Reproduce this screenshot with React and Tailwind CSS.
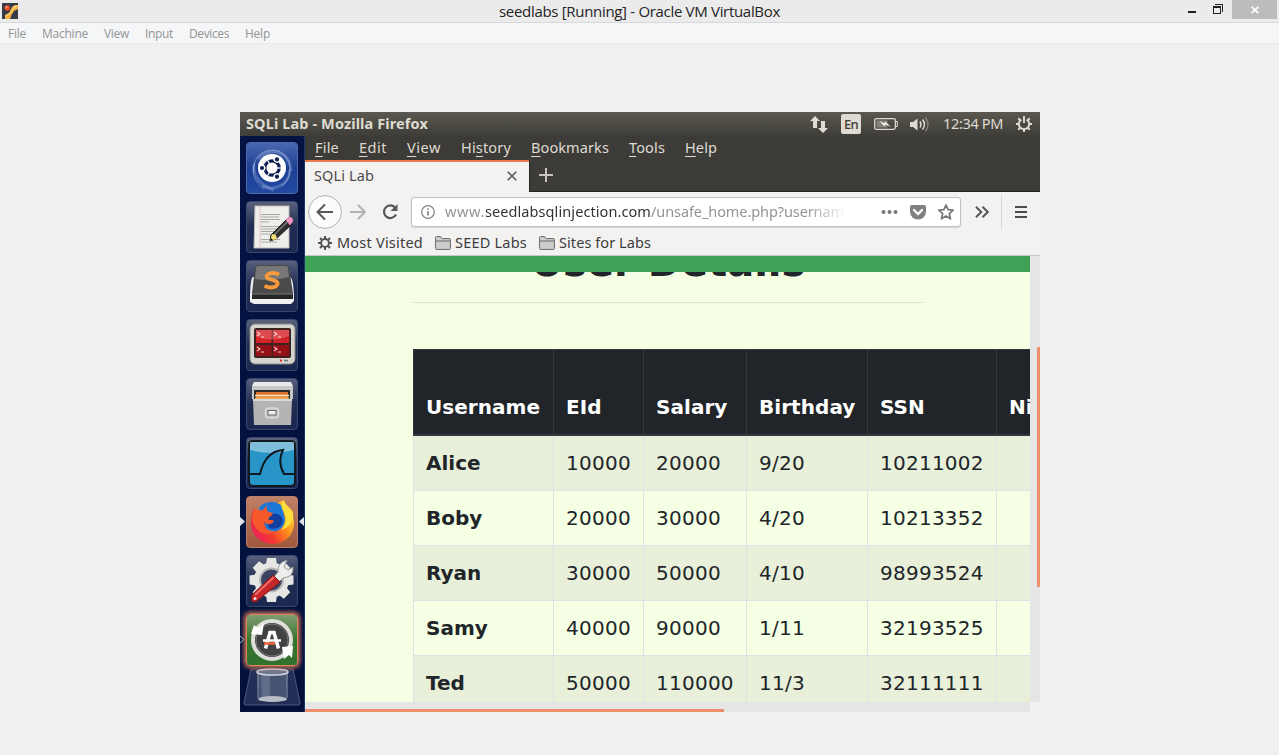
import { useLayoutEffect, useRef } from "react";

/* Text run that is tracked so that it fills exactly `w` pixels. */
function Fit({ w, className = "", children }) {
  const ref = useRef(null);
  useLayoutEffect(() => {
    const el = ref.current;
    el.style.letterSpacing = "0px";
    const natural = el.getBoundingClientRect().width;
    el.style.letterSpacing = (w - natural) / el.textContent.length + "px";
  }, [w]);
  return (
    <span className="block shrink-0" style={{ width: w }}>
      <span ref={ref} className={"inline-block whitespace-nowrap " + className}>{children}</span>
    </span>
  );
}

function TitleBar() {
  return (
    <div className="flex h-[23px] shrink-0 border-b border-[#d6d9dc] bg-[#ebebeb]">
      <svg className="mt-[3px] ml-[2px] size-4 shrink-0" viewBox="0 0 16 16">
        <rect width="16" height="16" fill="#373a48" />
        <path d="M10 4l3-2h3v4l-4 2-2 3-2 5H3v-4l4-2z" fill="#f6b041" />
        <path d="M11 4l4-1-4 3-3 4-4 3" stroke="#ffe08a" fill="none" />
        <circle cx="5.3" cy="5" r="2.8" fill="#f04b23" />
        <circle cx="4.6" cy="4.2" r="1.1" fill="#ff9d77" />
      </svg>
      <div className="flex h-[22px] flex-1 items-center pl-[481px] font-['Open_Sans'] text-[15px] leading-none text-[#242424]">
        <Fit w={281}>seedlabs [Running] - Oracle VM VirtualBox</Fit>
      </div>
      <svg className="h-[19px] w-[44px] shrink-0" viewBox="0 0 44 19" shapeRendering="crispEdges">
        <rect x="0" y="11" width="8" height="2" fill="#222" />
        <path d="M27 4h8v8h-1V5h-7z" fill="#222" />
        <path d="M25 6h8v8h-8z M26 8h6v5h-6z" fill="#222" fillRule="evenodd" />
      </svg>
      <div className="mr-[2px] flex h-[19px] w-[45px] items-center justify-center bg-[#bcbcbc]">
        <svg className="size-[8px]" viewBox="0 0 8 8">
          <path d="M.6.900l6.800 6.200M7.400.900L.6 7.100" stroke="#fff" strokeWidth="1.700" />
        </svg>
      </div>
    </div>
  );
}

const hostMenu = [["File", 18], ["Machine", 46], ["View", 25], ["Input", 28], ["Devices", 40], ["Help", 25]];

function HostMenu() {
  return (
    <div className="flex h-[21px] shrink-0 items-center gap-4 border-b border-[#e9ebec] bg-[#f5f6f8] pt-[2px] pl-2 font-['Open_Sans'] text-[12px] leading-none text-[#949494]">
      {hostMenu.map(([t, w]) => <Fit key={t} w={w}>{t}</Fit>)}
    </div>
  );
}

function TopPanel() {
  return (
    <div className="flex h-6 shrink-0 items-center bg-linear-to-b from-[#5a5850] to-[#3e3d38] pl-[6px] leading-none text-[#dfdbd2]">
      <Fit w={182} className="pb-[2px] text-[14.5px] font-bold">SQLi Lab - Mozilla Firefox</Fit>
      <svg className="mt-[1px] ml-[382px] h-[17px] w-[18px] shrink-0" viewBox="0 0 18 17">
        <path d="M5 0l5 5H7v7H3V5H0z M13 17l-5-5h3V5h4v7h3z" fill="#dfdbd2" />
      </svg>
      <div className="ml-[13px] flex h-5 w-5 items-center justify-center rounded-[2px] bg-[#dfdbd2] text-[13px] font-medium text-[#3c3b37]">
        <Fit w={14}>En</Fit>
      </div>
      <svg className="ml-[13px] h-3 w-6 shrink-0" viewBox="0 0 24 12">
        <rect x=".7" y=".7" width="20.600" height="10.600" rx="1.500" fill="none" stroke="#dfdbd2" strokeWidth="1.300" />
        <path d="M22 3.500h1.300v5H22" stroke="#dfdbd2" fill="none" />
        <rect x="2.500" y="2.500" width="11" height="7" fill="#85827a" />
        <path d="M5.500 3l5 2.200.8-1.700 5.700 5.500-5.500-2.500-1 2z" fill="#f2eee6" />
      </svg>
      <svg className="ml-3 h-[17px] w-[20px] shrink-0" viewBox="0 0 20 17" fill="none">
        <path d="M0 6h3l4.500-3.500v12L3 11H0z" fill="#dfdbd2" />
        <path d="M10 5.500q2 3 0 6M12.500 3.500q4 5 0 10" stroke="#dfdbd2" strokeWidth="1.500" />
        <path d="M15.500 1.500q5 7 0 14" stroke="#85827a" strokeWidth="1.400" />
      </svg>
      <div className="ml-[13px] text-[14.5px]"><Fit w={60} className="pb-[2px]">12:34 PM</Fit></div>
      <svg className="ml-[13px] size-4 shrink-0" viewBox="0 0 16 16" fill="none" stroke="#dfdbd2">
        <path d="M5.300 3.600A5.200 5.200 0 1 0 10.700 3.600M8 0v7" strokeWidth="1.900" />
        <path d="M0 8h3M13 8h3M8 13v3M2.300 2.300l2 2M13.700 2.300l-2 2M2.300 13.700l2-2M13.700 13.700l-2-2" strokeWidth="2" />
      </svg>
    </div>
  );
}

const tileBase = "flex size-[52px] shrink-0 items-center justify-center rounded-[4px] border ";
const glass = "border-[#3a476c] bg-linear-to-b from-[#59617c] via-[#202b51] to-[#1b2850]";

function Tile({ tone = glass, children }) {
  return (
    <div className={tileBase + tone}>
      <svg viewBox="0 0 52 52" className="size-[52px] shrink-0">{children}</svg>
    </div>
  );
}

const teeth = [0, 45, 90, 135, 180, 225, 270, 315];

function Launcher() {
  return (
    <div className="flex w-[65px] shrink-0 flex-col items-center gap-[7px] border-r border-[#1d3768] bg-linear-to-b from-[#041344] to-[#02103a] pt-[6px]">
      <Tile tone="border-[#4c68ab] bg-linear-to-b from-[#4968ae] via-[#1c3f93] to-[#2349a1]">
        <g fill="none" stroke="#a9c0ea">
          <path d="M8 31C5 14 20 5 33 9" strokeWidth="1" opacity=".6" />
          <path d="M12 17C24 3 45 10 45 29" strokeWidth="3" opacity=".3" />
          <path d="M32 9C46 14 48 34 36 44" strokeWidth="1" opacity=".6" />
          <path d="M44 28C43 44 28 49 16 44" strokeWidth="3" opacity=".3" />
          <path d="M8 22C6 36 18 45 28 48" strokeWidth="3" opacity=".3" />
          <path d="M18 47C8 40 5 30 9 20" strokeWidth="1" opacity=".45" />
        </g>
        <circle cx="26" cy="26" r="14" fill="#fff" />
        <circle cx="26" cy="26" r="7.200" fill="none" stroke="#101f52" strokeWidth="3.200" />
        {[60, 180, 300].map((a) => (
          <g key={a} transform={"rotate(" + a + " 26 26)"}>
            <circle cx="35.700" cy="26" r="3.200" fill="#fff" />
            <circle cx="36" cy="26" r="2.100" fill="#101f52" />
            <path d="M17 26h4" stroke="#fff" strokeWidth="1.200" />
          </g>
        ))}
      </Tile>
      <Tile>
        <path d="M9 5h34v42H8z" fill="#eeeeea" stroke="#bdbdb9" />
        <path d="M14 5v41" stroke="#e8aaa6" strokeWidth=".6" />
        <path d="M15 13.500h19M15 16h18M15 18.500h19M15 21h8M15 25.500h18M15 28h19M15 30.500h15M15 33h17M15 38.500h19M15 41h16" stroke="#a8a8a5" />
        <path d="M24 40l1-6L41 18l5 5-16 15z" fill="#30302f" stroke="#161616" />
        <path d="M27 35L42 20" stroke="#777" strokeWidth="1.600" />
        <path d="M24 40l2-7 4 1 1 4z" fill="#f5df74" />
        <path d="M24 40l1-3 2 2z" fill="#111" />
        <path d="M40 19l3-3q4 0 4 4l-3 4z" fill="#f29cc4" stroke="#d67aa7" />
      </Tile>
      <Tile>
        <path d="M7 17q-3 1-3 25l4 2h37l3-3q0-22-4-24" fill="#f0f0f0" />
        <path d="M9 8q0-3 3-3h28q3 0 3 3l4 25v6H6v-6z" fill="#4a4a4a" />
        <path d="M10 8q0-2 2-2h28q2 0 2 2l1 9q-18 5-34 2z" fill="#777" />
        <path d="M6 34h41v5H6z" fill="#272727" />
        <path d="M6 34h41" stroke="#767676" />
        <path d="M33 14.500q-5-2.500-10-.8-4.500 2.300-1 4.800l7 2.300q5 2.500 1 5.500-5 2.500-11.500-.3" fill="none" stroke="#f79b3c" strokeWidth="3.800" />
      </Tile>
      <Tile>
        <rect x="4" y="5" width="45" height="40" rx="5" fill="#d5d5cf" stroke="#8d8d87" />
        <rect x="8" y="9" width="37" height="30" rx="2" fill="#3e2222" />
        <path d="M10 11h15.500v13H10z M27 11h16v13H27z" fill="#d32329" />
        <path d="M10 26h15.500v11H10z M27 26h16v11H27z" fill="#951118" />
        <path d="M10 11h33v6q-18 7-33 0z" fill="#f28489" opacity=".4" />
        <g fill="none" stroke="#f6cfcf" strokeWidth="1.100">
          <path d="M11 13l3 2-3 2M15 18h3M28 13l3 2-3 2M32 18h3M11 28l3 2-3 2M15 33h3M28 28l3 2-3 2M32 33h3" />
        </g>
        <path d="M34 41.500h2" stroke="#f02020" strokeWidth="2" />
        <path d="M38 41.500h4" stroke="#777" strokeWidth="1.500" />
      </Tile>
      <Tile>
        <path d="M6 8l2-4h37l2 4v13H6z" fill="#eaeaea" />
        <path d="M6 8h41v13H6z" fill="#c8c8c8" />
        <path d="M8 12h36v10H8z" fill="#2d2b2a" />
        <path d="M10 14h32v10H10z" fill="#d87532" />
        <path d="M9 17.500h34" stroke="#ffe3ad" strokeWidth="1.500" />
        <path d="M9 20h34" stroke="#efb062" strokeWidth="1.500" />
        <path d="M7 21h39l-1 26H8z" fill="#b4b4b2" />
        <path d="M7 22h39" stroke="#dadada" strokeWidth="2" />
        <rect x="19.500" y="30" width="13" height="10" rx="2" fill="#c8c8c8" stroke="#e4e4e4" />
        <rect x="22" y="32.500" width="8" height="4.500" fill="#eee" stroke="#666" />
      </Tile>
      <Tile>
        <rect x="3" y="4" width="46" height="45" rx="4" fill="#2795c8" stroke="#101820" strokeWidth="2" />
        <path d="M4 5h44v8q-22 6-44 0z" fill="#c7e2ed" opacity=".55" />
        <path d="M4 37h10C17 24 24 14 37 13c-4 8-3 17 1 24h10" fill="none" stroke="#101820" strokeWidth="2" />
      </Tile>
      <div className="relative">
        <Tile tone="border-[#b98069] bg-linear-to-b from-[#be8066] to-[#a1583d]">
          <defs>
            <linearGradient id="fox" x1="0" y1=".8" x2="1" y2=".2">
              <stop offset="0" stopColor="#e81e63" />
              <stop offset=".35" stopColor="#f53a2e" />
              <stop offset=".65" stopColor="#ff8e1f" />
              <stop offset="1" stopColor="#ffe03c" />
            </linearGradient>
          </defs>
          <path d="M8 12c1 2 3 3 5 3L38 4c0 5 10 11 10 23a21.500 20.500 0 0 1-43 1C5 21 6 16 8 12z" fill="url(#fox)" />
          <path d="M13 12C18 5 30 4 36 10l3 13c0 10-10 15-18 12z" fill="#1d77d6" />
          <path d="M23 18c8-2 14 1 14 8-2 6-10 9-15 5z" fill="#153f9e" />
          <path d="M8 13c3 1 6 2 9 1 1-2 2-3 4-4-1 3 0 5 2 6l4 1c-1 3-4 4-5 6 2 2 4 0 6 2-3 5-8 3-10 1 0 7 6 10 12 9-10 7-23 0-24-13z" fill="#f65a2c" />
          <path d="M38 4c-4 5-3 8 0 12 3 6 2 13-3 18 9-2 13-9 12-17-1-5-8-7-9-13z" fill="#ffdd3b" />
        </Tile>
        <svg className="absolute top-[21px] -left-[6px] h-[9px] w-[5px]" viewBox="0 0 5 9"><path d="M0 0v9l5-4.500z" fill="#dfe3e8" /></svg>
        <svg className="absolute top-[21px] left-[53px] h-[9px] w-[5px]" viewBox="0 0 5 9"><path d="M5 0v9L0 4.500z" fill="#dfe3e8" /></svg>
      </div>
      <Tile>
        <g fill="#e6e6e4">
          {teeth.map((a) => <path key={a} d="M21 3h9l1.500 11h-12z" transform={"rotate(" + a + " 25.500 25)"} />)}
          <circle cx="25.500" cy="25" r="17.500" />
        </g>
        <circle cx="25.500" cy="25" r="11.500" fill="#3b4262" stroke="#b8b8b8" strokeWidth="2" />
        <path d="M27 23l5-6q-1-9 9-12l-3 7 4 3 5-3q1 10-10 11l-6 6z" fill="#ededed" stroke="#999" />
        <path d="M6 40L27 20l7 7-23 19q-4 2-5 0t0-6z" fill="#c5282b" stroke="#811315" />
        <path d="M9 40L28 22" stroke="#ef6d67" strokeWidth="2" />
        <circle cx="9" cy="43.500" r="1.500" fill="#f4dede" />
      </Tile>
      <div className="relative">
        <div className="rounded-[4px] shadow-[0_0_4px_2px_#cf765b]">
          <Tile tone="border-[#dd8758] bg-linear-to-b from-[#7d9c72] via-[#37752f] to-[#31702d]">
            <circle cx="26" cy="26" r="19" fill="#424242" stroke="#dededb" strokeWidth="4" />
            <circle cx="26" cy="26" r="16" fill="none" stroke="#777" strokeWidth="1" />
            <path d="M5 20l3-9 4 3 6-5-2 12z M36 33l11-1-1 12-3-3-5 4-1-4z" fill="#fff" />
            <path d="M19.500 34.500L24 18.500h4l4.500 16" fill="none" stroke="#fff" strokeWidth="3.500" />
            <path d="M17 26.500h18" stroke="#fff" strokeWidth="2.500" />
            <path d="M18 29.500h11" stroke="#ee6235" strokeWidth="2.500" />
          </Tile>
        </div>
        <svg className="absolute top-[21px] -left-[7px] h-[9px] w-[6px]" viewBox="0 0 6 9"><path d="M1 1l4 3.500L1 8" fill="none" stroke="#86bed1" /></svg>
      </div>
      <svg className="-mt-[6px] h-[39px] w-[58px] shrink-0" viewBox="0 0 58 39">
        <path d="M8 2h42l7 34q0 2-2 2H3q-2 0-2-2z" fill="#232f56" stroke="#4d587b" />
        <path d="M14 5l2 26h27l2-26z" fill="#586482" opacity=".7" />
        <path d="M18 8l1 23h8V8z" fill="#8490a7" opacity=".4" />
        <ellipse cx="29.500" cy="5" rx="15.500" ry="3" fill="#6d7890" stroke="#d4d9df" strokeWidth="1.500" />
        <ellipse cx="29.500" cy="32" rx="14.500" ry="3" fill="#b8bcc4" />
        <path d="M15 7v24M44 7v24" stroke="#8b95aa" />
      </svg>
    </div>
  );
}

const menus = [["", "F", "ile", 24], ["", "E", "dit", 28], ["", "V", "iew", 34], ["Hi", "s", "tory", 50], ["", "B", "ookmarks", 78], ["", "T", "ools", 36], ["", "H", "elp", 32]];

function FirefoxMenu() {
  return (
    <div className="flex h-6 shrink-0 items-center gap-5 bg-[#3c3b37] pb-[2px] pl-[10px] text-[14.5px] leading-none text-[#dfdbd2]">
      {menus.map(([a, b, c, w]) => (
        <Fit key={b} w={w}>{a}<span className="underline decoration-1 underline-offset-[3px]">{b}</span>{c}</Fit>
      ))}
    </div>
  );
}

function TabStrip() {
  return (
    <div className="flex h-8 shrink-0 bg-[#3c3b37] shadow-[inset_0_-1px_0_#252420]">
      <div className="flex w-[224px] items-center border-t-2 border-[#ed764d] bg-[#f3f2f1] pb-[2px] pl-[9px] text-[14.5px] leading-none text-[#4c4c4c]">
        <Fit w={60} className="pb-[1px]">SQLi Lab</Fit>
        <svg className="ml-[133px] size-[10px]" viewBox="0 0 10 10"><path d="M.7.700l8.600 8.600M9.300.700L.7 9.300" stroke="#5c5c5a" strokeWidth="1.600" /></svg>
      </div>
      <div className="flex items-center border-l border-[#252420] pb-[2px] pl-[9px]">
        <svg className="size-[14px]" viewBox="0 0 14 14"><path d="M7 0v14M0 7h14" stroke="#c6c3bb" strokeWidth="2" /></svg>
      </div>
    </div>
  );
}

function NavBar() {
  return (
    <div className="flex h-10 shrink-0 items-center bg-[#f3f2f1] pl-[3px] leading-none">
      <svg className="size-[34px] shrink-0" viewBox="0 0 34 34" fill="none">
        <circle cx="17" cy="17" r="16.400" fill="#fcfcfc" stroke="#b3b1af" />
        <path d="M25 17H10M17 9.500L9.500 17l7.500 7.500" stroke="#585856" strokeWidth="2" />
      </svg>
      <svg className="ml-2 size-4 shrink-0" viewBox="0 0 16 16" fill="none"><path d="M0 8h15M8 1l7 7-7 7" stroke="#b3b2b0" strokeWidth="2" /></svg>
      <svg className="ml-4 size-4 shrink-0" viewBox="0 0 16 16" fill="none">
        <path d="M13 3.500A6.300 6.300 0 1 0 14 10.500" stroke="#585856" strokeWidth="2.200" />
        <path d="M15.500 0v7h-7z" fill="#585856" />
      </svg>
      <div className="ml-[13px] flex h-[30px] w-[550px] shrink-0 items-center rounded-[3px] border border-[#c2c0be] bg-white pl-[9px] shadow-[0_1px_1px_#d9d8d6]">
        <svg className="size-[14px] shrink-0" viewBox="0 0 14 14" fill="none" stroke="#858583">
          <circle cx="7" cy="7" r="6.300" strokeWidth="1.200" /><path d="M7 6v4.500M7 3.300v1.500" strokeWidth="1.700" />
        </svg>
        <div className="ml-[10px] flex w-[402px] mask-r-from-90% pt-1 pb-[6px] text-[14.5px] text-[#949493]">
          <Fit w={40}>www.</Fit>
          <Fit w={166} className="text-[#333]">seedlabsqlinjection.com</Fit>
          <Fit w={193}>/unsafe_home.php?usernam</Fit>
        </div>
        <svg className="ml-[34px] h-4 w-[17px] shrink-0" viewBox="0 0 17 16" fill="#777"><circle cx="2.500" cy="8" r="2" /><circle cx="8.500" cy="8" r="2" /><circle cx="14.500" cy="8" r="2" /></svg>
        <svg className="ml-3 h-[15px] w-4 shrink-0" viewBox="0 0 16 15">
          <path d="M2 0h12q2 0 2 2v4.500a8 8 0 0 1-16 0V2q0-2 2-2z" fill="#808080" />
          <path d="M4 5l4 4 4-4" fill="none" stroke="#fff" strokeWidth="2.300" strokeLinecap="round" />
        </svg>
        <svg className="ml-3 size-4 shrink-0" viewBox="0 0 16 16"><path d="M8 1l2.100 4.700 5.100.5-3.900 3.400 1.200 5.200L8 12.100l-4.500 2.700 1.200-5.200L.8 6.200l5.100-.5z" fill="none" stroke="#777" strokeWidth="1.700" strokeLinejoin="round" /></svg>
      </div>
      <svg className="ml-[14px] h-3 w-[14px] shrink-0" viewBox="0 0 14 12"><path d="M1 .7L6.300 6 1 11.300M7.500.7L12.800 6 7.500 11.300" fill="none" stroke="#585856" strokeWidth="2" /></svg>
      <div className="ml-3 h-[34px] w-px bg-[#d5d3d1]" />
      <svg className="ml-[13px] h-3 w-3 shrink-0" viewBox="0 0 12 12" shapeRendering="crispEdges"><path d="M0 1h12M0 6h12M0 11h12" stroke="#4c4c4a" strokeWidth="2" /></svg>
    </div>
  );
}

function Folder() {
  return (
    <svg className="mr-1 mb-[1px] h-[14px] w-4 shrink-0" viewBox="0 0 16 14"><path d="M.6 12.500V1.500q0-.9.900-.9h4.200l1.500 2h7.300q.9 0 .9.900v9q0 .9-.9.900h-13q-.9 0-.9-.9z" fill="#cfcdcb" stroke="#6c6b69" /><path d="M1 5h14" stroke="#6c6b69" /></svg>
  );
}

function Bookmarks() {
  return (
    <div className="flex h-6 shrink-0 items-center border-b border-[#c8c6c4] bg-[#f3f2f1] pl-[13px] text-[14.5px] leading-none text-[#3c3c3c]">
      <svg className="mr-[5px] mb-[1px] size-[14px] shrink-0" viewBox="0 0 14 14" stroke="#555553" fill="none">
        <circle cx="7" cy="7" r="3.900" strokeWidth="2" />
        <path d="M7 0v3M7 11v3M0 7h3M11 7h3M2 2l2.200 2.200M12 2L9.800 4.200M2 12l2.200-2.200M12 12L9.800 9.800" strokeWidth="2" />
      </svg>
      <Fit w={86} className="pb-[2px]">Most Visited</Fit>
      <div className="w-3" /><Folder /><Fit w={72} className="pb-[2px]">SEED Labs</Fit>
      <div className="w-3" /><Folder /><Fit w={92} className="pb-[2px]">Sites for Labs</Fit>
    </div>
  );
}

const rows = [
  ["Alice", "10000", "20000", "9/20", "10211002"],
  ["Boby", "20000", "30000", "4/20", "10213352"],
  ["Ryan", "30000", "50000", "4/10", "98993524"],
  ["Samy", "40000", "90000", "1/11", "32193525"],
  ["Ted", "50000", "110000", "11/3", "32111111"],
];
const grid = "grid w-[700px] grid-cols-[140px_90px_103px_121px_129px_117px] ";

function Page() {
  return (
    <div className="h-[446px] w-[725px] shrink-0 overflow-hidden bg-[#f4ffe4] font-['DejaVu_Sans'] text-[#212529]">
      <div className="relative z-10 h-4 bg-[#3fa156]" />
      <div className="ml-[108px] flex h-[31px] w-[510px] items-end justify-center border-b border-[#dbe5cd]">
        <h1 className="pb-[16px] text-[40px] leading-[48px] font-bold whitespace-nowrap">User Details</h1>
      </div>
      <div className="mt-[46px] ml-[108px] text-[20px] leading-[30px]">
        <div className={grid + "h-[87px] border-t border-b-2 border-[#32383e] bg-[#212529] font-bold text-white"}>
          {["Username", "EId", "Salary", "Birthday", "SSN", "Nickname"].map((t) => (
            <div key={t} className="flex items-end border-l border-[#32383e] pb-3 pl-3 tracking-[0.05px]">{t}</div>
          ))}
        </div>
        {rows.map((r, i) => (
          <div key={r[0]} className={grid + "h-[55px] border-b border-[#dee2e6] " + (i % 2 ? "" : "bg-[#e8f0d9]")}>
            {[...r, ""].map((t, j) => (
              <div key={j} className={"flex items-center border-l border-[#dee2e6] pl-3 " + (j ? "tracking-[0.25px]" : "font-bold")}>{t}</div>
            ))}
          </div>
        ))}
      </div>
    </div>
  );
}

function Firefox() {
  return (
    <div className="flex w-[735px] flex-col">
      <FirefoxMenu />
      <TabStrip />
      <NavBar />
      <Bookmarks />
      <div className="flex h-[446px]">
        <Page />
        <div className="flex w-[10px] justify-end bg-[#e5e5e5] pt-[91px]">
          <div className="h-[240px] w-[3px] rounded-l-[1px] bg-[#ef8e6b]" />
        </div>
      </div>
      <div className="flex h-[10px]">
        <div className="flex w-[725px] items-end bg-[#e5e5e5]">
          <div className="h-[3px] w-[419px] rounded-t-[1px] bg-[#ef8e6b]" />
        </div>
        <div className="w-[10px] bg-[#f2f1f0]" />
      </div>
    </div>
  );
}

export default function App() {
  return (
    <div className="flex h-[755px] w-[1279px] flex-col overflow-hidden bg-[#f0f0f0]">
      <TitleBar />
      <HostMenu />
      <div className="mt-[68px] ml-[240px] flex h-[600px] w-[800px] flex-col overflow-hidden font-['Noto_Sans']">
        <TopPanel />
        <div className="flex h-[576px]">
          <Launcher />
          <Firefox />
        </div>
      </div>
    </div>
  );
}
